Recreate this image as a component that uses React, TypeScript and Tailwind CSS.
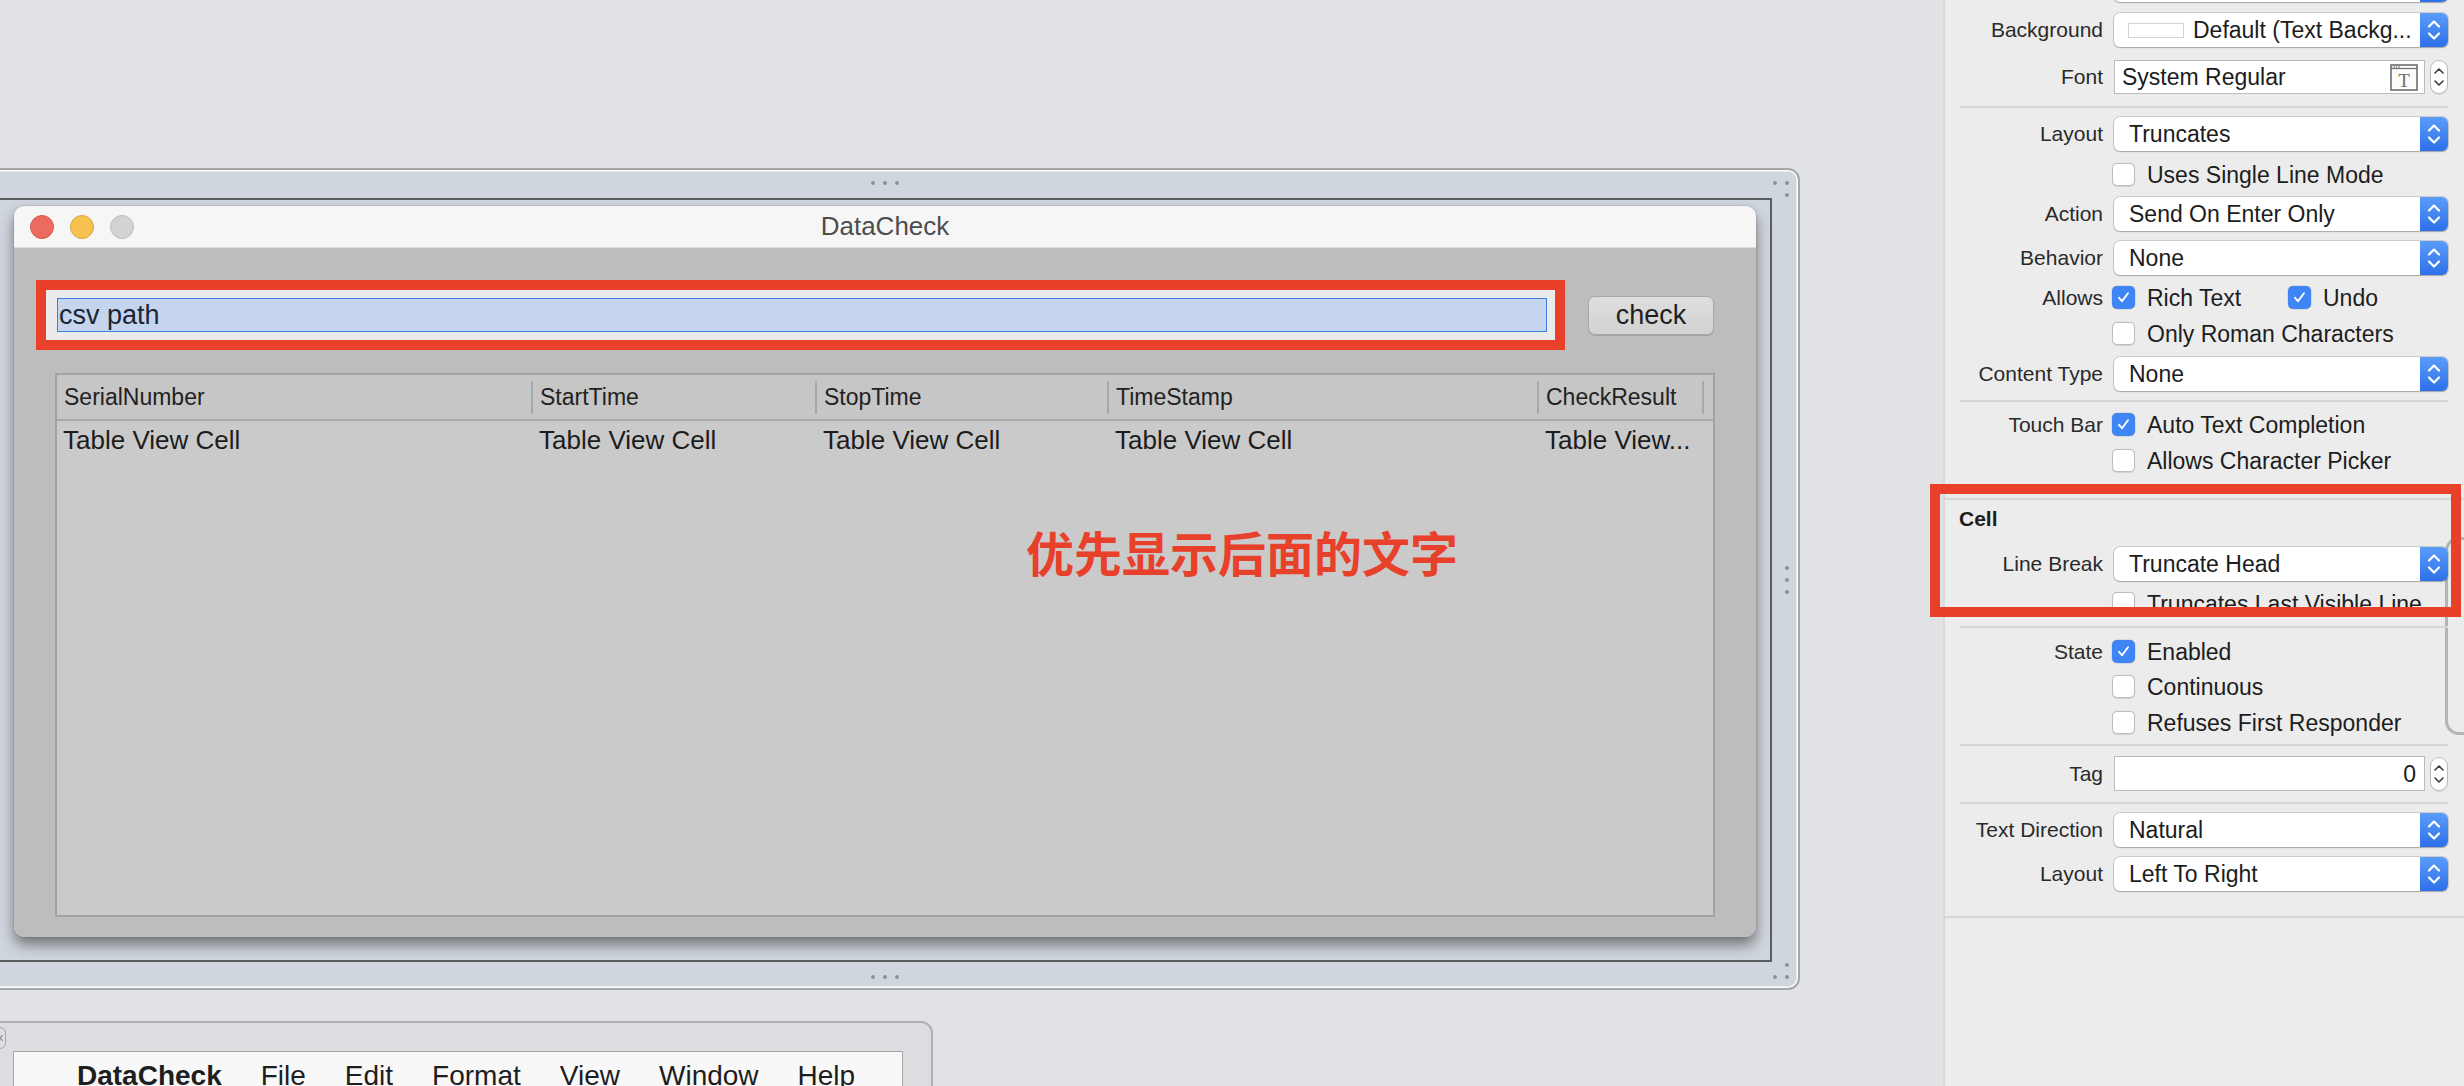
import React from "react";

function Dot({ className }: { className: string }) {
  return (
    <span
      className={`absolute h-[4px] w-[4px] -translate-x-1/2 -translate-y-1/2 rounded-full bg-[#8b9198] ${className}`}
    />
  );
}

function Window() {
  const cols = [
    { h: "SerialNumber", w: "w-[474px]", rw: "w-[476px]" },
    { h: "StartTime", w: "w-[282px]", rw: "w-[284px]" },
    { h: "StopTime", w: "w-[290px]", rw: "w-[292px]" },
    { h: "TimeStamp", w: "w-[428px]", rw: "w-[430px]" },
    { h: "CheckResult", w: "w-[163px]", rw: "w-[165px]" },
  ];
  return (
    <div className="flex h-full flex-col overflow-hidden rounded-[10px] shadow-[0_8px_14px_rgba(0,0,0,0.45),0_0_2px_rgba(0,0,0,0.25)]">
      <div className="relative flex h-[42px] shrink-0 items-center border-b border-[#dcdcdc] bg-[#f6f6f6] pl-[16px]">
        <div className="flex gap-[16px]">
          <span className="h-[24px] w-[24px] rounded-full border border-[#d5584c] bg-[#ed6a5e]" />
          <span className="h-[24px] w-[24px] rounded-full border border-[#d8a444] bg-[#f6c14f]" />
          <span className="h-[24px] w-[24px] rounded-full border border-[#bcbcbc] bg-[#d3d3d3]" />
        </div>
        <div className="absolute inset-0 flex items-center justify-center text-[26px] text-[#4d4d4d]">
          DataCheck
        </div>
      </div>
      <div className="flex flex-1 flex-col bg-[#bdbdbd] pb-[20px] pt-[32px]">
        <div className="ml-[22px] flex items-center">
          <div className="flex h-[70px] w-[1529px] items-center border-[10px] border-[#e9402a] bg-[#ebebeb] pl-[11px] pr-[8px]">
            <div className="flex h-[34px] flex-1 items-center border border-[#3c7de0] bg-[#c5d5ee] pl-[1px] text-[27px] leading-[32px] text-[#1c2535]">
              csv path
            </div>
          </div>
          <div className="ml-[23px] flex h-[39px] w-[126px] items-center justify-center rounded-[7px] border border-[#a9a9a9] bg-gradient-to-b from-[#dedede] to-[#d2d2d2] text-[27px] leading-[32px] text-[#1f1f1f] shadow-[0_1px_1px_rgba(0,0,0,0.15)]">
            check
          </div>
        </div>
        <div className="relative mx-[41px] mt-[23px] flex-1 border-2 border-[#a2a2a2] bg-[#cacaca]">
          <div className="flex h-[46px] items-center border-b-2 border-[#a9a9a9] bg-[#c6c6c6]">
            {cols.map((c) => (
              <React.Fragment key={c.h}>
                <div className={`${c.w} pl-[7px] text-[23px] leading-[28px] text-[#222]`}>{c.h}</div>
                <span className="h-[33px] w-[2px] bg-[#a9a9a9]" />
              </React.Fragment>
            ))}
          </div>
          <div className="flex h-[38px] items-center text-[26px] leading-[32px] text-[#1c1c1c]">
            {cols.map((c, i) => (
              <div key={c.h} className={`${c.rw} whitespace-nowrap pl-[6px]`}>
                {i === 4 ? "Table View..." : "Table View Cell"}
              </div>
            ))}
          </div>
          <div className="absolute left-[969px] top-[152px] font-['Noto_Sans_CJK_SC',sans-serif] text-[48px] font-bold leading-none text-[#e8412b]">
            优先显示后面的文字
          </div>
        </div>
      </div>
    </div>
  );
}

function Canvas() {
  return (
    <div className="relative h-full w-[1943px] shrink-0 overflow-hidden">
      <div className="absolute left-[-60px] top-[168px] h-[822px] w-[1860px] rounded-r-[12px] border-2 border-[#a5a7aa] bg-[#d0d6dd] pb-[26px] pl-[26px] pr-[26px] pt-[28px] shadow-[inset_0_0_0_1.5px_#ffffff]">
        <Dot className="left-[931px] top-[13px]" />
        <Dot className="left-[943px] top-[13px]" />
        <Dot className="left-[955px] top-[13px]" />
        <Dot className="left-[1833px] top-[13px]" />
        <Dot className="left-[1845px] top-[13px]" />
        <Dot className="left-[1845px] top-[25px]" />
        <Dot className="left-[1845px] top-[398px]" />
        <Dot className="left-[1845px] top-[410px]" />
        <Dot className="left-[1845px] top-[422px]" />
        <Dot className="left-[931px] top-[807px]" />
        <Dot className="left-[943px] top-[807px]" />
        <Dot className="left-[955px] top-[807px]" />
        <Dot className="left-[1845px] top-[795px]" />
        <Dot className="left-[1833px] top-[807px]" />
        <Dot className="left-[1845px] top-[807px]" />
        <div className="h-full border-2 border-[#5b5c5e] pb-[23px] pl-[44px] pr-[14px] pt-[6px]">
          <Window />
        </div>
      </div>
      <div className="absolute left-[-20px] top-[1021px] h-[120px] w-[953px] rounded-tr-[12px] border-2 border-[#b0b0b2] bg-[#dcdde1] pl-[31px] pt-[28px]">
        <div className="flex h-[60px] w-[890px] items-start gap-[39px] border border-[#a6a6a6] bg-[#f8f8f8] pl-[63px] pt-[8px] text-[28px] leading-[32px] text-[#1e1e1e]">
          <span className="font-bold">DataCheck</span>
          <span>File</span>
          <span>Edit</span>
          <span>Format</span>
          <span>View</span>
          <span>Window</span>
          <span>Help</span>
        </div>
      </div>
      <div className="absolute left-[-12px] top-[1027px] flex h-[22px] w-[18px] items-center justify-end rounded-[6px] border border-[#a9a9a9] bg-[#dedede] pr-[1px] text-[14px] leading-none text-[#888]">
        ×
      </div>
    </div>
  );
}

function Chevrons() {
  return (
    <svg width="14" height="34" viewBox="0 0 14 34" fill="none" stroke="white" strokeWidth="2.2" strokeLinecap="round" strokeLinejoin="round">
      <path d="M2 13.5 L7 8.5 L12 13.5" />
      <path d="M2 20.5 L7 25.5 L12 20.5" />
    </svg>
  );
}

function Popup({ text, swatch }: { text: string; swatch?: boolean }) {
  return (
    <div className="flex h-[34px] w-[334px] overflow-hidden rounded-[6px] bg-white shadow-[0_0_0_1px_rgba(0,0,0,0.13),0_1px_1.5px_rgba(0,0,0,0.2)]">
      <div className="flex min-w-0 flex-1 items-center whitespace-nowrap pl-[14px] text-[23px] leading-[28px] text-[#1c1c1c]">
        {swatch && <span className="mr-[9px] h-[15px] w-[56px] shrink-0 border border-[#d4d4d4] bg-white" />}
        <span className={swatch ? "" : "ml-[1px]"}>{text}</span>
      </div>
      <div className="flex w-[28px] items-center justify-center bg-gradient-to-b from-[#5a9cf9] to-[#2f6fea]">
        <Chevrons />
      </div>
    </div>
  );
}

function Stepper() {
  return (
    <div className="flex h-[34px] w-[18px] items-center justify-center rounded-[9px] border border-[#bdbdbd] bg-white shadow-[0_1px_1px_rgba(0,0,0,0.1)]">
      <svg width="12" height="34" viewBox="0 0 12 34" fill="none" stroke="#3a3a3a" strokeWidth="1.6" strokeLinecap="round" strokeLinejoin="round">
        <path d="M2 13 L6 9 L10 13" />
        <path d="M2 21 L6 25 L10 21" />
      </svg>
    </div>
  );
}

function FontField() {
  return (
    <div className="flex items-center">
      <div className="flex h-[34px] w-[311px] items-center border border-[#bcbcbc] bg-white pl-[7px] pr-[6px] text-[23px] leading-[28px] text-[#1c1c1c]">
        <span className="flex-1">System Regular</span>
        <svg width="28" height="27" viewBox="0 0 28 27" fill="none">
          <rect x="1" y="1" width="26" height="25" fill="#fbfbfb" stroke="#6e6e6e" strokeWidth="1.6" />
          <line x1="1" y1="4.5" x2="27" y2="4.5" stroke="#6e6e6e" strokeWidth="1.2" />
          <circle cx="4" cy="3" r="0.8" fill="#6e6e6e" />
          <circle cx="6.5" cy="3" r="0.8" fill="#6e6e6e" />
          <circle cx="9" cy="3" r="0.8" fill="#6e6e6e" />
          <text x="14" y="23" textAnchor="middle" fontFamily="Liberation Serif, serif" fontSize="19" fill="#6a6a6a">T</text>
        </svg>
      </div>
      <div className="ml-[5px]">
        <Stepper />
      </div>
    </div>
  );
}

function TagField() {
  return (
    <div className="flex items-center">
      <div className="flex h-[35px] w-[311px] items-center justify-end border border-[#bcbcbc] bg-white pr-[8px] text-[23px] leading-[28px] text-[#1c1c1c]">
        0
      </div>
      <div className="ml-[5px]">
        <Stepper />
      </div>
    </div>
  );
}

function Box({ checked }: { checked?: boolean }) {
  if (checked) {
    return (
      <span className="flex h-[23px] w-[23px] shrink-0 items-center justify-center rounded-[5px] bg-[#3f85f5] shadow-[0_0_0_0.5px_rgba(0,0,0,0.15)]">
        <svg width="15" height="15" viewBox="0 0 15 15" fill="none" stroke="white" strokeWidth="1.9" strokeLinecap="round" strokeLinejoin="round">
          <path d="M3 7.8 L6 11.2 L12 3.2" />
        </svg>
      </span>
    );
  }
  return (
    <span className="h-[23px] w-[23px] shrink-0 rounded-[5px] border border-[#bdbdbd] bg-white shadow-[0_0.5px_1px_rgba(0,0,0,0.12)]" />
  );
}

function Check({ label, checked }: { label: string; checked?: boolean }) {
  return (
    <div className="flex items-center">
      <Box checked={checked} />
      <span className="ml-[12px] whitespace-nowrap text-[23px] leading-[28px] text-[#1d1d1d]">{label}</span>
    </div>
  );
}

function Row({ label, children, className = "" }: { label: string; children: React.ReactNode; className?: string }) {
  return (
    <div className={`flex h-[34px] items-center ${className}`}>
      <div className="w-[158px] shrink-0 text-right text-[21px] leading-[26px] text-[#2a2a2a]">{label}</div>
      <div className="ml-[11px]">{children}</div>
    </div>
  );
}

function CheckRow({ label = "", children, className = "" }: { label?: string; children: React.ReactNode; className?: string }) {
  return (
    <div className={`flex h-[23px] items-center ${className}`}>
      <div className="w-[158px] shrink-0 text-right text-[21px] leading-[26px] text-[#2a2a2a]">{label}</div>
      <div className="ml-[9px] flex items-center">{children}</div>
    </div>
  );
}

function Divider({ className = "" }: { className?: string }) {
  return <div className={`ml-[15px] mr-[16px] h-[2px] bg-[#d6d6d6] ${className}`} />;
}

function Inspector() {
  return (
    <div className="relative h-full w-[521px] shrink-0 border-l-2 border-[#d8d8d8] bg-[#ececec]">
      <div className="absolute left-[500px] top-[537px] h-[198px] w-[40px] rounded-l-[14px] border-[3px] border-r-0 border-[#b4b4b4]" />
      <div className="relative flex flex-col">
        <Row className="mt-[-32px]" label="">
          <Popup text="" />
        </Row>
        <Row className="mt-[11px]" label="Background">
          <Popup swatch text="Default (Text Backg..." />
        </Row>
        <Row className="mt-[13px]" label="Font">
          <FontField />
        </Row>
        <Divider className="mt-[12px]" />
        <Row className="mt-[9px]" label="Layout">
          <Popup text="Truncates" />
        </Row>
        <CheckRow className="mt-[12px]">
          <Check label="Uses Single Line Mode" />
        </CheckRow>
        <Row className="mt-[11px]" label="Action">
          <Popup text="Send On Enter Only" />
        </Row>
        <Row className="mt-[10px]" label="Behavior">
          <Popup text="None" />
        </Row>
        <CheckRow className="mt-[11px]" label="Allows">
          <div className="w-[176px]">
            <Check checked label="Rich Text" />
          </div>
          <Check checked label="Undo" />
        </CheckRow>
        <CheckRow className="mt-[13px]">
          <Check label="Only Roman Characters" />
        </CheckRow>
        <Row className="mt-[12px]" label="Content Type">
          <Popup text="None" />
        </Row>
        <Divider className="mt-[9px]" />
        <CheckRow className="mt-[11px]" label="Touch Bar">
          <Check checked label="Auto Text Completion" />
        </CheckRow>
        <CheckRow className="mt-[13px]">
          <Check label="Allows Character Picker" />
        </CheckRow>
        <div className="mt-[26px] h-[2px] bg-[#d6d6d6]" />
        <div className="mt-[7px] pl-[14px] text-[21px] font-bold leading-[24px] text-[#1d1d1d]">Cell</div>
        <Row className="mt-[16px]" label="Line Break">
          <Popup text="Truncate Head" />
        </Row>
        <CheckRow className="mt-[11px]">
          <Check label="Truncates Last Visible Line" />
        </CheckRow>
        <Divider className="mt-[11px]" />
        <CheckRow className="mt-[12px]" label="State">
          <Check checked label="Enabled" />
        </CheckRow>
        <CheckRow className="mt-[12px]">
          <Check label="Continuous" />
        </CheckRow>
        <CheckRow className="mt-[13px]">
          <Check label="Refuses First Responder" />
        </CheckRow>
        <Divider className="mt-[10px]" />
        <Row className="mt-[10px] h-[35px]" label="Tag">
          <TagField />
        </Row>
        <Divider className="mt-[11px]" />
        <Row className="mt-[9px]" label="Text Direction">
          <Popup text="Natural" />
        </Row>
        <Row className="mt-[10px]" label="Layout">
          <Popup text="Left To Right" />
        </Row>
        <div className="mt-[25px] h-[2px] bg-[#d6d6d6]" />
      </div>
      <div className="pointer-events-none absolute left-[-15px] top-[484px] h-[133px] w-[531px] border-[10px] border-[#e9402a]" />
    </div>
  );
}

export default function App() {
  return (
    <div className="flex h-[1086px] w-[2464px] overflow-hidden bg-[#e1e2e6] font-['Liberation_Sans',Arial,sans-serif]">
      <Canvas />
      <Inspector />
    </div>
  );
}
